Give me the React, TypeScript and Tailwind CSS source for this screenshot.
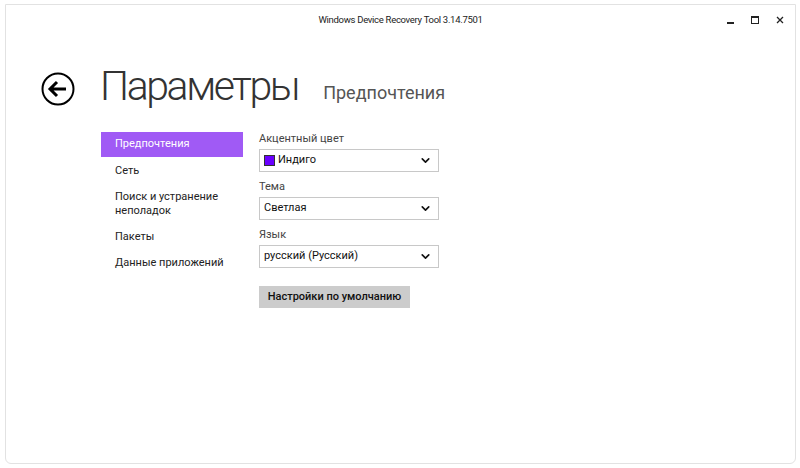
import { ChevronDown } from "lucide-react";

const font = { fontFamily: 'Roboto, "Noto Sans", sans-serif' };

const navItems = ["Предпочтения", "Сеть", "Поиск и устранение неполадок", "Пакеты", "Данные приложений"];

function Select({ label, value, swatch }: { label: string; value: string; swatch?: boolean }) {
  return (
    <div className="flex flex-col">
      <div className="text-[11px] leading-[16px] text-[#444] mb-[2px]">{label}</div>
      <div className="h-[23px] w-[180px] border border-[#c8c8c8] bg-white flex items-center pl-[4px] pr-[6px]">
        {swatch && <span className="w-[11px] h-[11px] bg-[#6a00ff] border border-[#333] mr-[3px]" />}
        <span className="text-[11px] text-[#111] flex-1">{value}</span>
        <ChevronDown size={13} strokeWidth={3} className="text-[#111]" />
      </div>
    </div>
  );
}

export default function App() {
  return (
    <div className="w-[800px] h-[468px] bg-white pt-[4px] pl-[5px] pr-[4px]" style={font}>
      <div className="h-[460px] border border-[#e2e2e2] rounded-b-[6px] bg-white flex flex-col">
        {/* title bar */}
        <div className="h-[30px] grid grid-cols-[1fr_auto_1fr] items-center">
          <div />
          <div className="text-[9.5px] text-[#222] pt-[1px] tracking-[-0.3px]">Windows Device Recovery Tool 3.14.7501</div>
          <div className="flex justify-end items-center gap-[17px] pr-[11px]">
            <span className="w-[7px] h-[2px] bg-[#222] mt-[6px]" />
            <span className="w-[8px] h-[8px] border border-[#222] border-t-[2px]" />
            <svg width="8" height="8" viewBox="0 0 8 8">
              <path d="M1 1 L7 7 M7 1 L1 7" stroke="#222" strokeWidth="1.3" />
            </svg>
          </div>
        </div>

        {/* header */}
        <div className="flex items-end mt-[31px] pl-[35px]">
          <svg width="34" height="34" viewBox="0 0 34 34" className="mb-[1px]">
            <circle cx="17" cy="17" r="15.5" fill="none" stroke="#000" strokeWidth="2" />
            <path d="M9 17 H25 M16 10 L9 17 L16 24" fill="none" stroke="#000" strokeWidth="3" strokeLinejoin="miter" />
          </svg>
          <h1 className="ml-[25px] text-[41px] leading-none font-light text-[#333] tracking-[-2.4px]">Параметры</h1>
          <div className="ml-[25px] text-[18px] leading-none text-[#555] mb-[5px]">Предпочтения</div>
        </div>

        {/* body */}
        <div className="flex mt-[25px] pl-[95px]">
          <nav className="w-[142px] flex flex-col">
            {navItems.map((item, i) => (
              <div
                key={item}
                className={
                  i === 0
                    ? "h-[25px] mb-[1px] flex items-center pl-[14px] bg-[#a05af5] text-white text-[11px]"
                    : "py-[6px] pl-[14px] pr-[2px] text-[11px] leading-[14px] text-[#222]"
                }
              >
                {item}
              </div>
            ))}
          </nav>
          <div className="ml-[16px] flex flex-col gap-[7px] -mt-[1px]">
            <Select label="Акцентный цвет" value="Индиго" swatch />
            <Select label="Тема" value="Светлая" />
            <Select label="Язык" value="русский (Русский)" />
            <button className="mt-[11px] w-[151px] h-[22px] bg-[#cccccc] text-[11px] text-[#111] font-medium whitespace-nowrap">
              Настройки по умолчанию
            </button>
          </div>
        </div>
      </div>
    </div>
  );
}
